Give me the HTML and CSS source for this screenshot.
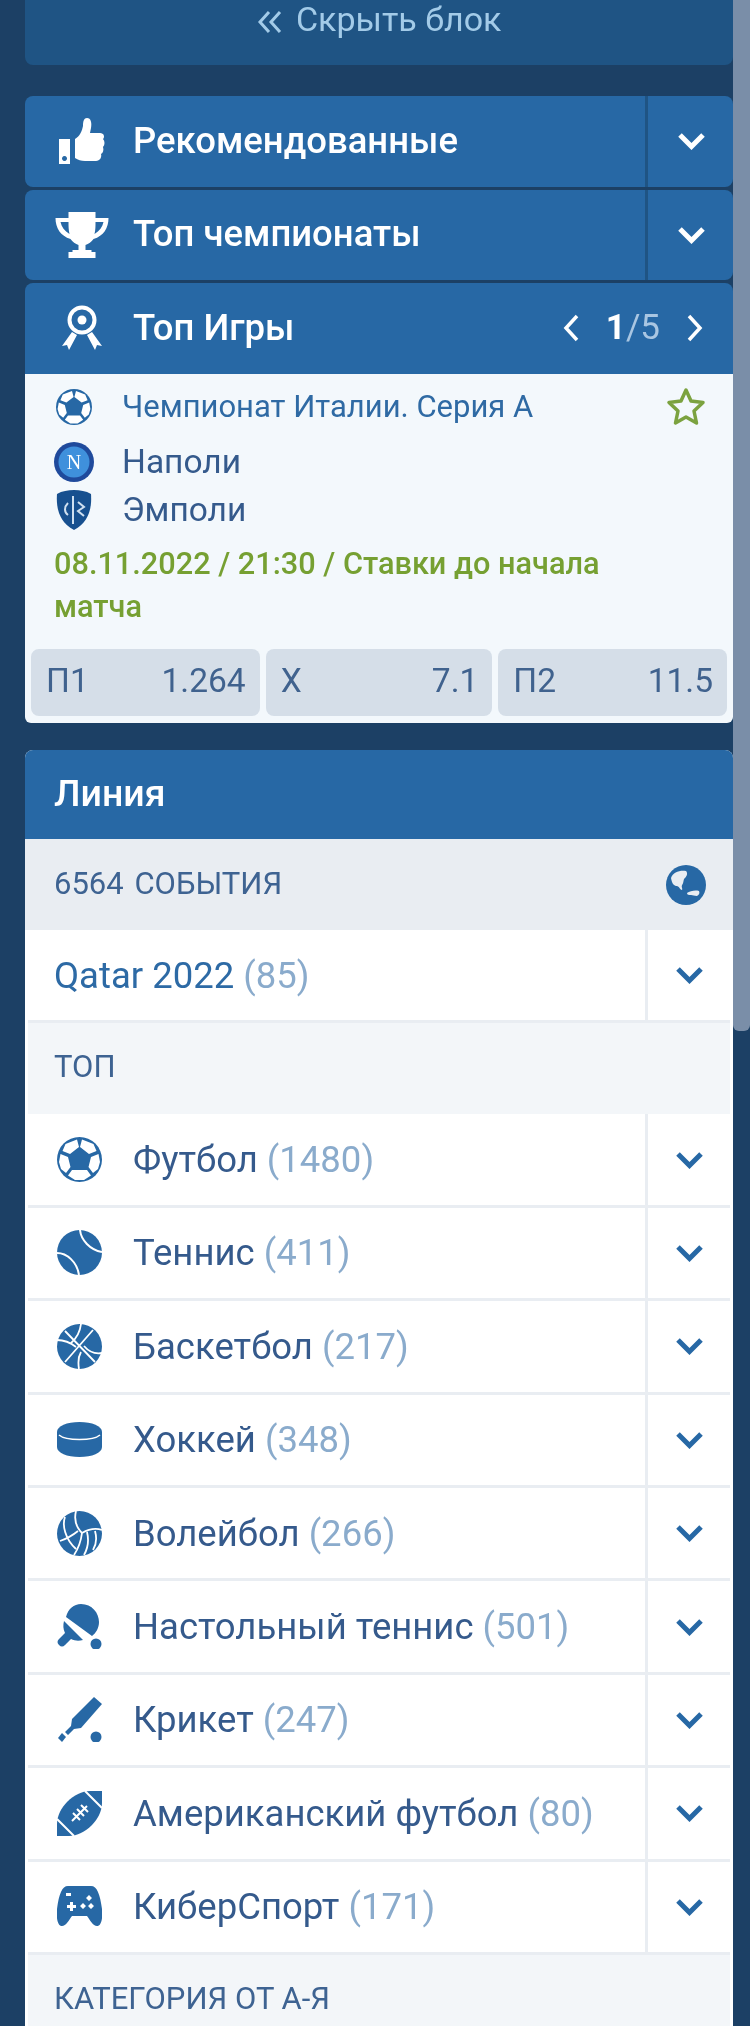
FILE: index.html
```html
<!DOCTYPE html>
<html lang="ru">
<head>
    <meta charset="UTF-8">
    <meta name="viewport" content="width=device-width, initial-scale=1.0">
    <title>Линия</title>
    <link rel="stylesheet" href="styles.css">
</head>
<body>
    <svg class="sprites" width="0" height="0">
        <symbol id="chev-down" viewBox="0 0 29 18"><path d="M3 3l11.500 11.500L26 3" fill="none" stroke="currentColor" stroke-width="5"/></symbol>
        <symbol id="ball" viewBox="0 0 45 45">
            <circle cx="22.500" cy="22.500" r="22.500" fill="currentColor"/>
            <path fill="#fff" d="M8.500 7L20 2.500l2 7.500-9 7-7.500-3zM36.500 7L25 2.500 23 10l9 7 7.500-3zM3.500 17l7.500 3 2.500 10L9 36l-5-4-2-7zM41.500 17L34 20l-2.500 10L36 36l5-4 2-7zM15 33h15l4 5.500-7 4.500h-9l-7-4.500z"/>
        </symbol>
    </svg>

    <div class="sidebar">
        <div class="hide-block">
            <svg class="hide-icon" viewBox="0 0 26 24"><path d="M12 2L3 12l9 10M23 2l-9 10 9 10" fill="none" stroke="currentColor" stroke-width="3"/></svg>
            Скрыть блок
        </div>

        <div class="head">
            <div class="head-main">
                <svg class="head-icon" viewBox="0 0 46 46"><path fill="#fff" fill-rule="evenodd" d="M0 21h11v25H0zM5.500 38a2.500 2.500 0 1 0 .01 0zM16 21c5-3 7-8 8-13 0-5 1-8 4-8 4 0 5 5 4 10l-1 5h10c4 0 5 4 3 6 2 2 2 6 0 8 1 3 0 6-2 7 1 3-1 7-5 7H26c-4 0-7-1-10-3z"/></svg>
                <span class="head-text">Рекомендованные</span>
            </div>
            <div class="head-arrow"><svg class="chev"><use href="#chev-down"/></svg></div>
        </div>
        <div class="head">
            <div class="head-main">
                <svg class="head-icon" viewBox="0 0 53 46"><path fill="#fff" d="M13 0h27v6h13c0 10-5 18-15 21-2 3-5 5-8 6v5h6v2h4v6H13v-6h4v-2h6v-5c-3-1-6-3-8-6C5 24 0 16 0 6h13zM5 10c1 5 4 9 9 12-1-4-1-8-1-12zm43 0h-8c0 4 0 8-1 12 5-3 8-7 9-12z"/></svg>
                <span class="head-text">Топ чемпионаты</span>
            </div>
            <div class="head-arrow"><svg class="chev"><use href="#chev-down"/></svg></div>
        </div>

        <div class="head head-games">
            <div class="head-main">
                <svg class="head-icon" viewBox="0 0 46 46"><circle cx="23" cy="15" r="12.500" fill="none" stroke="#fff" stroke-width="4"/><circle cx="23" cy="15" r="4.500" fill="#fff"/><path fill="#fff" d="M13 27l5 3-8 15-2-5-5 1zM33 27l-5 3 8 15 2-5 5 1z"/></svg>
                <span class="head-text">Топ Игры</span>
            </div>
            <div class="pager">
                <svg class="pager-arrow" viewBox="0 0 18 28"><path d="M15 2L4 14l11 12" fill="none" stroke="#fff" stroke-width="3.500"/></svg>
                <span class="pager-num"><b>1</b>/5</span>
                <svg class="pager-arrow" viewBox="0 0 18 28"><path d="M3 2l11 12L3 26" fill="none" stroke="#fff" stroke-width="3.500"/></svg>
            </div>
        </div>
        <div class="game-card">
            <div class="league">
                <div class="game-icon"><svg class="league-ball"><use href="#ball"/></svg></div>
                <span class="league-name">Чемпионат Италии. Серия А</span>
                <svg class="star" viewBox="0 0 40 40"><path d="M20 3l5 11 12 1.500-9 8.500 2.500 12L20 30l-10.500 6L12 24l-9-8.500L15 14z" fill="none" stroke="#7ba23f" stroke-width="3.500" stroke-linejoin="round"/></svg>
            </div>
            <div class="team">
                <div class="game-icon">
                    <svg class="team-logo" viewBox="0 0 40 40"><circle cx="20" cy="20" r="20" fill="#1f4a9c"/><circle cx="20" cy="20" r="15.500" fill="#3f90dc"/><text x="20" y="27" class="napoli-n">N</text></svg>
                </div>
                <span>Наполи</span>
            </div>
            <div class="team">
                <div class="game-icon">
                    <svg class="team-logo" viewBox="0 0 36 40"><path fill="#17508f" d="M18 0c6 0 12 1 17 4 1 14-2 28-17 36C3 32 0 18 1 4c5-3 11-4 17-4z"/><path d="M17 6v28M12 13c-4 4-4 9 0 12M22 12l6 5-6 4 6 5" fill="none" stroke="#cfe0f0" stroke-width="2"/></svg>
                </div>
                <span>Эмполи</span>
            </div>
            <div class="game-date">08.11.2022 / 21:30 / Ставки до начала матча</div>
            <div class="odds">
                <div class="odd odd-wide"><span>П1</span><span>1.264</span></div>
                <div class="odd"><span>X</span><span>7.1</span></div>
                <div class="odd odd-wide"><span>П2</span><span>11.5</span></div>
            </div>
        </div>

        <div class="line-panel">
            <div class="line-title">Линия</div>
            <div class="line-total">
                <span class="total-text">6564 события</span>
                <svg class="globe" viewBox="0 0 40 40"><circle cx="20" cy="20" r="20" fill="#2768a5"/><path fill="#e9edf2" d="M5 13c2-6 9-8 15-7 2 2 1 5-1 7-2 1-1 5-3 7-1 2 1 4 0 5-2 0-2-3-5-4-3 0-5-2-6-8zM21 28c3-2 8-3 12-2 1 2 0 4-2 5-3 0-4-1-6-1s-4 0-4-2z"/></svg>
            </div>
            <div class="row">
                <div class="row-main row-plain">Qatar 2022<span class="count">(85)</span></div>
                <div class="row-arrow"><svg class="chev"><use href="#chev-down"/></svg></div>
            </div>
            <div class="group-title">Топ</div>

            <div class="row">
                <div class="row-main">
                    <svg class="sport-icon"><use href="#ball"/></svg>
                    Футбол<span class="count">(1480)</span>
                </div>
                <div class="row-arrow"><svg class="chev"><use href="#chev-down"/></svg></div>
            </div>
            <div class="row">
                <div class="row-main">
                    <svg class="sport-icon" viewBox="0 0 45 45"><circle cx="22.500" cy="22.500" r="22.500" fill="currentColor"/><path d="M23 0c1 10 10 20 22 22M0 23c10 0 20 9 22 22" fill="none" stroke="#fff" stroke-width="2"/></svg>
                    Теннис<span class="count">(411)</span>
                </div>
                <div class="row-arrow"><svg class="chev"><use href="#chev-down"/></svg></div>
            </div>
            <div class="row">
                <div class="row-main">
                    <svg class="sport-icon" viewBox="0 0 45 45"><circle cx="22.500" cy="22.500" r="22.500" fill="currentColor"/><path d="M24 0c-1 8-4 14-10 19M36 6L8 38M8 7l30 31M0 16c8 0 14 3 19 7M27 22c5 6 12 8 18 7M24 28c-3 5-3 11-2 17" fill="none" stroke="#fff" stroke-width="1.800"/></svg>
                    Баскетбол<span class="count">(217)</span>
                </div>
                <div class="row-arrow"><svg class="chev"><use href="#chev-down"/></svg></div>
            </div>
            <div class="row">
                <div class="row-main">
                    <svg class="sport-icon" viewBox="0 0 45 45"><path fill="currentColor" d="M0 15C0 9 10 5 22.500 5S45 9 45 15v15c0 6-10 10-22.500 10S0 36 0 30z"/><path d="M2 18c7 6 34 6 41 0" fill="none" stroke="#fff" stroke-width="1.600"/></svg>
                    Хоккей<span class="count">(348)</span>
                </div>
                <div class="row-arrow"><svg class="chev"><use href="#chev-down"/></svg></div>
            </div>
            <div class="row">
                <div class="row-main">
                    <svg class="sport-icon" viewBox="0 0 45 45"><circle cx="22.500" cy="22.500" r="22.500" fill="currentColor"/><path d="M19 0c-2 8 0 16 6 22M8 6C5 14 8 28 19 38M3 30c6-2 13-6 18-10M25 22c7-4 14-5 20-3M25 22c-1 8-4 16-8 22M30 21c2 8 1 16-3 23M38 20c2 7 1 14-2 19" fill="none" stroke="#fff" stroke-width="1.800"/></svg>
                    Волейбол<span class="count">(266)</span>
                </div>
                <div class="row-arrow"><svg class="chev"><use href="#chev-down"/></svg></div>
            </div>
            <div class="row">
                <div class="row-main">
                    <svg class="sport-icon" viewBox="0 0 45 45"><path fill="currentColor" d="M9 13C11 5 17 0 24 0c11 0 18 9 18 18 0 6-3 11-7 14zM7 17l19 19c-4 1-8 1-12-1l-6 6c-2 2-4 2-6 0s-2-4 0-6l6-6c-2-4-2-8-1-12z"/><circle cx="39" cy="40" r="5.500" fill="currentColor"/></svg>
                    Настольный теннис<span class="count">(501)</span>
                </div>
                <div class="row-arrow"><svg class="chev"><use href="#chev-down"/></svg></div>
            </div>
            <div class="row">
                <div class="row-main">
                    <svg class="sport-icon" viewBox="0 0 45 45"><path fill="currentColor" d="M37 0l8 7-21 24-7 1-6 6-3-3 6-6 1-7z"/><path fill="currentColor" d="M5 36l4 4-4 5-4-4z"/><circle cx="39" cy="40" r="5.500" fill="currentColor"/></svg>
                    Крикет<span class="count">(247)</span>
                </div>
                <div class="row-arrow"><svg class="chev"><use href="#chev-down"/></svg></div>
            </div>
            <div class="row">
                <div class="row-main">
                    <svg class="sport-icon" viewBox="0 0 45 45"><path fill="currentColor" d="M45 0v12c0 16-17 33-33 33H0V33C0 17 17 0 33 0z"/><path d="M28 0l17 17M0 28l17 17M15 30l15-15M16 22l7 7M20 18l7 7M24 14l7 7" fill="none" stroke="#fff" stroke-width="2"/></svg>
                    Американский футбол<span class="count">(80)</span>
                </div>
                <div class="row-arrow"><svg class="chev"><use href="#chev-down"/></svg></div>
            </div>
            <div class="row">
                <div class="row-main">
                    <svg class="sport-icon" viewBox="0 0 45 45"><path fill="currentColor" d="M11 2h23c6 0 9 8 11 23 1 10-1 17-5 17s-7-6-10-10H15c-3 4-6 10-10 10s-6-7-5-17C2 10 5 2 11 2z"/><path fill="#fff" d="M9 9h5v3H9zM13 18h3v3h3v3h-3v3h-3v-3h-3v-3h3zM32 11l3 3-3 3-3-3zM26 19l3 3-3 3-3-3zM34 19l3 3-3 3-3-3z"/></svg>
                    КиберСпорт<span class="count">(171)</span>
                </div>
                <div class="row-arrow"><svg class="chev"><use href="#chev-down"/></svg></div>
            </div>
            <div class="group-title">Категория от А-Я</div>
        </div>
    </div>

    <div class="scroll-thumb"></div>
</body>
</html>
```

FILE: styles.css
```css
* {
    margin: 0;
    padding: 0;
    box-sizing: border-box;
}

html, body {
    height: 2026px;
    overflow: hidden;
}

body {
    position: relative;
    background-color: #1c4065;
    font-family: Roboto, "Noto Sans", sans-serif;
    font-size: 36.5px;
    color: #355a8c;
}

.sprites {
    position: absolute;
}

.sidebar {
    padding: 0 17px 0 25px;
    filter: blur(0.6px);
}

.scroll-thumb {
    position: absolute;
    top: 0;
    right: 0;
    width: 17px;
    height: 1031px;
    background: #7a8ea8;
    border-radius: 0 0 6px 6px;
}

.hide-block {
    height: 65px;
    margin-bottom: 31px;
    line-height: 38px;
    font-size: 34px;
    text-align: center;
    background: #1f5484;
    border-radius: 0 0 8px 8px;
    color: #a3cbe8;
}

.hide-icon {
    width: 26px;
    height: 24px;
    margin-right: 5px;
    vertical-align: -3px;
}

.head {
    display: flex;
    height: 90.5px;
    margin-bottom: 3px;
    background: #2768a5;
    border-radius: 8px;
    color: #fff;
    font-weight: 500;
}

.head-main {
    flex: 1;
    display: flex;
    align-items: center;
    gap: 24px;
    padding-left: 30px;
}

.head-text {
    padding-bottom: 2px;
}

.head-icon {
    width: 54px;
    height: 46px;
    flex-shrink: 0;
}

.head-arrow {
    width: 88px;
    display: flex;
    align-items: center;
    justify-content: center;
    padding-left: 1px;
    border-left: 3px solid #1f5484;
    color: #fff;
}

.chev {
    width: 29px;
    height: 18px;
}

.head-games {
    margin-bottom: 0;
    border-radius: 8px 8px 0 0;
}

.pager {
    display: flex;
    align-items: center;
    gap: 26px;
    padding-right: 29px;
}

.pager-arrow {
    width: 18px;
    height: 28px;
}

.pager-num {
    padding-bottom: 2px;
    font-size: 35px;
    color: #a9c6e2;
    font-weight: 400;
}

.pager-num b {
    color: #fff;
    font-weight: 700;
}

.game-card {
    padding: 7px 6px 7px;
    margin-bottom: 27px;
    background: #f3f8fc;
    border-radius: 0 0 6px 6px;
}

.league, .team {
    display: flex;
    align-items: center;
    padding-left: 23px;
}

.league {
    height: 52px;
    margin-bottom: 5px;
    padding-right: 21px;
    font-size: 31px;
    color: #2f6aa4;
}

.team {
    height: 48px;
    font-size: 33.5px;
    color: #355a8c;
}

.game-icon {
    width: 40px;
    margin-right: 28px;
    display: flex;
    justify-content: center;
    color: #2768a5;
}

.league-ball {
    width: 36px;
    height: 36px;
}

.team-logo {
    width: 40px;
    height: 40px;
}

.napoli-n {
    fill: #fff;
    font-family: "Liberation Serif", serif;
    font-size: 20px;
    text-anchor: middle;
}

.star {
    width: 40px;
    height: 40px;
    margin-left: auto;
}

.game-date {
    margin-top: 8.5px;
    padding: 0 100px 0 23px;
    font-size: 30.7px;
    font-weight: 500;
    line-height: 43px;
    color: #76a032;
}

.odds {
    display: flex;
    gap: 6px;
    margin-top: 20.5px;
}

.odd {
    flex: 1;
    height: 67px;
    display: flex;
    align-items: center;
    justify-content: space-between;
    padding: 0 14px 3px 15px;
    background: #d5dee8;
    border-radius: 8px;
    color: #40628e;
    font-size: 33.5px;
}

.odd-wide {
    flex: 1.01;
}

.line-panel {
    background: #fff;
    border-radius: 8px 8px 0 0;
}

.line-title {
    height: 89.5px;
    padding-left: 29px;
    line-height: 86px;
    background: #2768a5;
    border-radius: 8px 8px 0 0;
    color: #fff;
    font-size: 37.5px;
    font-weight: 500;
}

.line-total {
    height: 91px;
    display: flex;
    align-items: center;
    justify-content: space-between;
    padding: 0 27px 0 29px;
    background: #e9edf2;
    font-size: 31px;
    color: #3e6392;
    text-transform: uppercase;
}

.total-text {
    padding-bottom: 3px;
    word-spacing: 3px;
}

.globe {
    width: 40px;
    height: 40px;
}

.row {
    display: flex;
    height: 93.4px;
    margin: 0 3px;
    border-bottom: 3px solid #e9edf2;
}

.row-main {
    flex: 1;
    display: flex;
    align-items: center;
    padding-left: 29px;
}

.row-plain {
    padding-left: 26px;
    color: #2d6aa5;
}

.row-arrow {
    width: 85px;
    display: flex;
    align-items: center;
    justify-content: center;
    padding-left: 1px;
    border-left: 3px solid #e9edf2;
    color: #2768a5;
}

.sport-icon {
    width: 45px;
    height: 45px;
    margin-right: 31px;
    flex-shrink: 0;
    color: #2768a5;
}

.count {
    margin-left: 9px;
    color: #8aabcc;
}

.group-title {
    height: 91px;
    margin: 0 3px;
    padding-left: 26px;
    line-height: 88px;
    background: #f3f6f9;
    font-size: 31px;
    color: #3e6392;
    text-transform: uppercase;
}
```
